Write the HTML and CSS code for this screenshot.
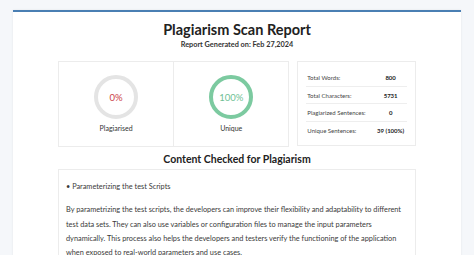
FILE: index.html
```html
<!DOCTYPE html>
<html lang="en">
<head>
  <meta charset="UTF-8">
  <title>Plagiarism Scan Report</title>
  <link rel="stylesheet" href="styles.css">
</head>
<body>
  <div class="report">
    <h1>Plagiarism Scan Report</h1>
    <p class="date">Report Generated on: Feb 27,2024</p>

    <div class="summary">
      <div class="scores">
        <div class="score">
          <div class="ring plag">0%</div>
          <div class="label">Plagiarised</div>
        </div>
        <div class="score">
          <div class="ring unique">100%</div>
          <div class="label">Unique</div>
        </div>
      </div>
      <table class="stats">
        <tr><td>Total Words:</td><td class="val">800</td></tr>
        <tr><td>Total Characters:</td><td class="val">5731</td></tr>
        <tr><td>Plagiarized Sentences:</td><td class="val">0</td></tr>
        <tr><td>Unique Sentences:</td><td class="val">39 (100%)</td></tr>
      </table>
    </div>

    <h2>Content Checked for Plagiarism</h2>
    <div class="content">
      <p>&bull; Parameterizing the test Scripts</p>
      <p>By parametrizing the test scripts, the developers can improve their flexibility and adaptability to different test data sets. They can also use variables or configuration files to manage the input parameters dynamically. This process also helps the developers and testers verify the functioning of the application when exposed to real-world parameters and use cases.</p>
    </div>
  </div>
</body>
</html>
```

FILE: styles.css
```css
body {
  margin: 0;
  padding: 10px 13px 0;
  background: #f5f7fa;
  font-family: Lato, "Open Sans", sans-serif;
  color: #333;
}
.report {
  background: white;
  border-top: 2px solid #4a7fb3;
  box-shadow: 0 0 2px #e3e6ea;
  padding: 9px 45px 20px;
  height: 400px;
}
h1 {
  margin: 0;
  text-align: center;
  font-size: 14.5px;
  line-height: 18px;
  color: #222;
}
.date {
  margin: 1px 0 0;
  text-align: center;
  font-size: 7.3px;
  line-height: 10px;
  font-weight: bold;
  color: #333;
}
.summary {
  display: flex;
  gap: 8px;
  margin-top: 11px;
}
.scores {
  display: flex;
  border: 1px solid #ececec;
  width: 230px;
}
.score {
  flex: 1;
  height: 84px;
  display: flex;
  flex-direction: column;
  align-items: center;
  padding-top: 13px;
  box-sizing: border-box;
}
.score + .score {
  border-left: 1px solid #ececec;
}
.ring {
  width: 36px;
  height: 36px;
  border-radius: 50%;
  border: 4px solid #e4e4e4;
  display: flex;
  align-items: center;
  justify-content: center;
  font-size: 9.5px;
}
.ring.plag {
  color: #cc3f47;
}
.ring.unique {
  border-color: #7ccaa0;
  color: #6fbf95;
}
.label {
  margin-top: 5px;
  font-size: 7px;
  color: #333;
}
.stats {
  border: 1px solid #ececec;
  border-collapse: separate;
  border-spacing: 0;
  padding: 7px 8px;
  width: 119px;
  height: 85px;
  box-sizing: border-box;
  font-size: 6px;
  color: #444;
  white-space: nowrap;
}
.stats td {
  border-bottom: 1px solid #eee;
}
.stats tr:last-child td {
  border-bottom: none;
}
.stats .val {
  font-weight: bold;
  text-align: center;
  color: #222;
}
h2 {
  margin: 5px 0 3px;
  text-align: center;
  font-size: 10.5px;
  line-height: 14px;
  color: #222;
}
.content {
  border: 1px solid #ececec;
  padding: 10px 7px;
  font-size: 7.35px;
  line-height: 14.3px;
  color: #3a3a3a;
}
.content p {
  margin: 0 0 9px;
}
```
